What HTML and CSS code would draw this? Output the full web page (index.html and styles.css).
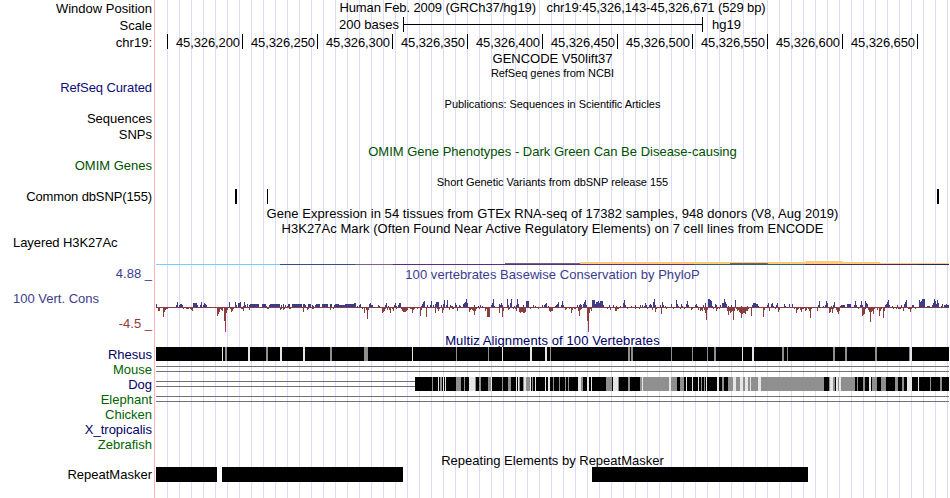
FILE: index.html
```html
<!DOCTYPE html>
<html lang="en">
<head>
    <meta charset="UTF-8">
    <title>Genome Browser - chr19:45,326,143-45,326,671</title>
    <link rel="stylesheet" href="styles.css">
</head>
<body>
    <div class="browser">
        <div class="row head">
            <div class="label">Window Position</div>
            <div class="track title position">Human Feb. 2009 (GRCh37/hg19) &nbsp; chr19:45,326,143-45,326,671 (529 bp)</div>
        </div>
        <div class="row head">
            <div class="label">Scale</div>
            <div class="track scale">
                <span class="scale-size">200 bases</span>
                <span class="scale-bar"></span>
                <span>hg19</span>
            </div>
        </div>
        <div class="row head">
            <div class="label">chr19:</div>
            <div class="track ruler">
                <span class="first"></span>
                <span>45,326,200</span>
                <span>45,326,250</span>
                <span>45,326,300</span>
                <span>45,326,350</span>
                <span>45,326,400</span>
                <span>45,326,450</span>
                <span>45,326,500</span>
                <span>45,326,550</span>
                <span>45,326,600</span>
                <span>45,326,650</span>
            </div>
        </div>

        <div class="row h15"><div class="label"></div><div class="track title">GENCODE V50lift37</div></div>
        <div class="row h14"><div class="label"></div><div class="track title small">RefSeq genes from NCBI</div></div>
        <div class="row h17"><div class="label refseq">RefSeq Curated</div></div>

        <div class="row h14"><div class="label"></div><div class="track title small">Publications: Sequences in Scientific Articles</div></div>
        <div class="row h16"><div class="label">Sequences</div></div>
        <div class="row h17"><div class="label">SNPs</div></div>

        <div class="row h14"><div class="label"></div><div class="track title omim">OMIM Gene Phenotypes - Dark Green Can Be Disease-causing</div></div>
        <div class="row h17"><div class="label omim">OMIM Genes</div></div>

        <div class="row h14"><div class="label"></div><div class="track title small">Short Genetic Variants from dbSNP release 155</div></div>
        <div class="row h17">
            <div class="label snp-label">Common dbSNP(155)</div>
            <svg class="track" width="794" height="15" shape-rendering="crispEdges">
                <path d="M79 0h2v15h-2zM111 0h1v15h-1zM781 0h2v15h-2z"/>
            </svg>
        </div>

        <div class="row h15"><div class="label"></div><div class="track title wide">Gene Expression in 54 tissues from GTEx RNA-seq of 17382 samples, 948 donors (V8, Aug 2019)</div></div>
        <div class="row h14"><div class="label"></div><div class="track title wide">H3K27Ac Mark (Often Found Near Active Regulatory Elements) on 7 cell lines from ENCODE</div></div>
        <div class="row layered">
            <div class="label left">Layered H3K27Ac</div>
            <svg class="track" width="794" height="31" shape-rendering="crispEdges">
                <path fill="#73d0ff" d="M0 29h124v1H0z"/>
                <path fill="#35507f" d="M124 29h75v1h-75z"/>
                <path fill="#80607f" d="M199 29h38v1h-38z"/>
                <path fill="#5f2a7e" d="M237 29h301v1H237z"/>
                <path fill="#35607c" d="M538 29h111v1H538z"/>
                <path fill="#4b2460" d="M649 29h113v1H649z"/>
                <path fill="#24245e" d="M762 29h31v1h-31z"/>
                <path fill="#6d6480" d="M349 28h75v1h-75z"/>
                <path fill="#ffcb78" d="M424 27h225v-1h38v1h37v1h69v1H424z"/>
                <path fill="#77685c" d="M574 28h38v1h-38z"/>
            </svg>
        </div>

        <div class="row cons">
            <div class="label cons-labels">
                <span class="up">4.88 _</span>
                <span class="up left">100 Vert. Cons</span>
                <span class="down">-4.5 _</span>
            </div>
            <div class="track">
                <div class="title wide up">100 vertebrates Basewise Conservation by PhyloP</div>
                <svg id="phylop" width="794" height="51" shape-rendering="crispEdges"></svg>
            </div>
        </div>

        <div class="row h14"><div class="label"></div><div class="track title multiz blue">Multiz Alignments of 100 Vertebrates</div></div>
        <div class="row h15"><div class="label blue">Rhesus</div><svg class="track" id="rhesus" width="794" height="15" shape-rendering="crispEdges"></svg></div>
        <div class="row h15"><div class="label green">Mouse</div><div class="track gap"></div></div>
        <div class="row h15"><div class="label blue">Dog</div><div class="track gap"><svg id="dog" width="794" height="15" shape-rendering="crispEdges"></svg></div></div>
        <div class="row h15"><div class="label green">Elephant</div><div class="track gap"></div></div>
        <div class="row h15"><div class="label green">Chicken</div></div>
        <div class="row h15"><div class="label blue">X_tropicalis</div></div>
        <div class="row h15"><div class="label green">Zebrafish</div></div>

        <div class="row h15"><div class="label"></div><div class="track title repeat-title">Repeating Elements by RepeatMasker</div></div>
        <div class="row h15">
            <div class="label">RepeatMasker</div>
            <svg class="track" width="794" height="15" shape-rendering="crispEdges">
                <path d="M0 0h61v15H0zM66 0h181v15H66zM436 0h216v15H436z"/>
            </svg>
        </div>
    </div>
    <script src="tracks.js"></script>
</body>
</html>
```
FILE: styles.css
```css
body {
    margin: 0;
    background: #fff;
    color: #000;
    font-family: "Liberation Sans", Arial, Helvetica, sans-serif;
    font-size: 13px;
    line-height: 15px;
}
.browser {
    width: 950px;
    height: 498px;
    overflow: hidden;
    box-sizing: border-box;
    /* red divider, then the vertical guide lines */
    background:
        linear-gradient(#ffb3b3, #ffb3b3) 154px 0 / 1px 100% no-repeat,
        linear-gradient(#fff, #fff) 0 0 / 156px 100% no-repeat,
        linear-gradient(to right, #dcdcf8 1px, transparent 1px) 167px 0 / 12px 100%;
}
.row {
    display: grid;
    grid-template-columns: 152px 794px;
    column-gap: 4px;
    white-space: nowrap;
}
.head {
    height: 17px;
}
.head .label, .head .ruler {
    line-height: 17px;
}
.h14 { height: 14px; }
.h15 { height: 15px; }
.h16 { height: 16px; }
.h17 { height: 17px; }
.label {
    text-align: right;
}
.left {
    text-align: left;
    padding-left: 13px;
}
.layered .left {
    letter-spacing: -0.07px;
}
.title {
    text-align: center;
    width: 793px;
}
.position {
    letter-spacing: -0.1px;
}
.wide {
    letter-spacing: 0.05px;
}
.multiz {
    letter-spacing: 0.1px;
}
.small {
    font-size: 11px;
    letter-spacing: -0.04px;
}
svg {
    display: block;
}
.scale {
    display: flex;
}
.scale-size {
    width: 243px;
    text-align: right;
    margin-right: 4px;
}
.scale-bar {
    width: 298px;
    height: 15px;
    border-left: 1px solid #000;
    border-right: 1px solid #000;
    background: linear-gradient(#000, #000) 0 7px / 100% 1px no-repeat;
    margin-right: 9px;
}
.ruler {
    display: flex;
    letter-spacing: -0.1px;
}
.ruler span {
    box-sizing: border-box;
    width: 75px;
    height: 15px;
    padding-right: 2px;
    border-right: 1px solid #000;
    text-align: right;
}
.ruler .first {
    width: 12px;
}
.refseq {
    color: #0c0c78;
    letter-spacing: -0.1px;
}
.snp-label {
    letter-spacing: -0.12px;
}
.omim { color: #005000; }
.blue { color: #000064; }
.green { color: #006400; }
.up { color: #3c3c8c; }
.down { color: #8c3c3c; }
.layered {
    height: 31px;
}
.cons {
    height: 67px;
}
.cons-labels {
    display: flex;
    flex-direction: column;
    gap: 10px;
}
.cons .title, .repeat-title {
    padding-top: 1px;
}
.gap {
    width: 793px;
    background:
        linear-gradient(#707070, #707070) 0 4px / 100% 1px no-repeat,
        linear-gradient(#707070, #707070) 0 9px / 100% 1px no-repeat;
}
```
FILE: tracks.js
```js
const NS = 'http://www.w3.org/2000/svg';

function rect(svg, x, y, w, h, fill) {
    const r = document.createElementNS(NS, 'rect');
    r.setAttribute('x', x);
    r.setAttribute('y', y);
    r.setAttribute('width', w);
    r.setAttribute('height', h);
    r.setAttribute('fill', fill);
    svg.appendChild(r);
}

// Each block covers 200px of the track. Positions are thirds of a pixel
// from the block start, "from-to:height" or "from:height" for one column.
const blocks = [
    { start: -6,
      up: '18:3 78:2 81:5 87:2 90-96:3 96:2 129-141:4 141:2 150:2 153:5 159:2 162:4 165:3 168:2 237:5 255:5 258:2 264-270:4 270:5 279:1 282:5 285:2 291:3 297:2 300-327:3 336-348:3 348:1 357:2 360-390:3 393:2 399:3 405:2 411:1 414:3 417:3 426-456:3 459-465:3 465:2 474-483:3 486:2 489:1 495:2 498-510:3 516-534:3 540-546:3 552:2 555:3 558-567:3 567:2 570-585:2 585-600:3',
      down: '21:1 24-30:4 39:10 42:5 45:3 48:2 51:2 84:1 99:2 108-117:2 120:2 123:3 126:4 201:9 204:7 207:5 210:2 213:3 216:4 222:14 225:23 228:6 231:3 240:2 243:5 246:4 249:2 252:1 273:2 276:2 279:4 297:3 327:1 351-357:2 390:3 393:2 399:3 402:2 417-423:2 459:5 471:3 474:2 486:2 489:2 510:1 534:1 540:3 549:2' },
    { start: 194,
      up: '0-12:3 12-18:4 21:1 27:2 30:3 57:3 60:4 63-69:2 84:2 87:1 105:2 108:4 114:1 132:2 135:4 138:1 144:2 147-153:4 213:1 216:3 219:5 222:6 231:2 240:2 243:6 249:2 255:3 258-267:5 273:2 279:3 282:7 288:2 291:7 300:2 303-309:1 315:4 318:2 327:2 330:1 339:3 342:4 345:5 348:8 351:4 372:2 384:1 390:2 396:1 423:2 426:4 429:8 432:1 447:3 450:2 453:4 456:2 471:8 474:2 480:4 483:8 492:1 498:2 501:8 504:3 519:2 528-537:6 549:2 555:1 576:2 582:2 585:3 588:4 594:1',
      down: '36:2 42:6 48:3 51:12 54:3 72-78:1 96:6 99:5 102:4 105:2 111:3 117:3 120:6 126:2 129:4 138:2 153:2 156:4 159-168:5 168:4 171:3 180-186:2 186:6 189:3 192:2 201:2 210:9 213:3 222:1 228:10 234:1 240:1 255:6 261:2 264:4 267:2 276:6 279:3 297:3 306:2 309:2 321:4 330:1 357:5 360:3 363:2 366:3 369:4 372:8 375:4 378:2 387:2 405:4 408:2 411-420:10 432:1 447:6 456:10 459:4 465:1 474:3 477:2 489:2 495:2 498:4 507:5 510:6 513-519:5 519-525:6 525:5 540:2 564:2 567:1 582:1 597:4' },
    { start: 394,
      up: '15:1 18:2 21:3 24:5 33:2 36:6 39:2 81:2 87:2 90:3 93:2 99:3 102:5 105:7 108:2 126:7 129-135:7 135:3 138-144:5 144-147:6 147:4 150-159:6 156:4 159:2 177:2 189:2 198:1 210:1 219:4 222:7 225:2 243:1 255:2 270:2 276:2 282:1 285:4 288:2 297:2 300:3 303:2 309:5 312:8 315:2 330:2 336:5 339:2 345:1 363:3 378:7 381:3 384:1 393:3 396:1 408:3 411:6 414:2 435:2 438:3 441:1 459:2 465:4 474-480:8 480:7 483:6 486:1 495:3 498:2 510:2 516:4 519:4 522:8 525:5 528:3 534:1 543:2 555:7 573:1 591:1',
      down: '0:5 3-9:4 9:1 45:3 48:2 57:2 63:6 66:3 72:2 75:2 84:4 87:9 90:3 93:2 96:1 111:14 114:23 117:6 120:2 123:4 171:2 180:3 183:1 192:1 195:4 198:4 201:2 204:2 213:1 231:2 255:2 267:2 291:2 303:1 306:3 315:5 318:2 324:1 333:7 336:1 348:2 369:2 390:2 402:2 423:3 426:2 438:1 444:3 450:4 453:3 456:4 462:3 465:6 468:13 471:3 489:2 498:4 501:2 507:2 531:4 534:8 537:4 540:6 543:5 546:4 549:13 552:4 558:2 561:4 564:3 567:5 570:6 573:11 576:7 579:6 582:6 585:7 588:4 591:4 594:2' },
    { start: 594,
      up: '6:2 9-18:4 18-24:3 24:1 51:2 54:4 63:3 66:4 69:1 78:2 81:4 102:3 105:1 117:3 126:3 204:2 207:6 219:1 225:2 228:6 231:4 243:1 249:2 252:5 270:1 273-285:2 291-303:3 312:2 315:6 318:2 330:2 333:6 336:2 345:6 348:4 351:3 405:2 408:3 411:5 414:7 417:2 426:1 441:2 453:2 462:3 465:5 468:7 486:2 489:2 507:7 510:5 513:6 516-525:8 531:1 534-540:1 546:2 549:4 552:8 555:6 558:3 561:7 564:4 573:1 576:3 582:2 585:2 588:3 591:2 594:2',
      down: '3:9 27-36:1 39:10 42:3 57:4 60:1 72:1 75:2 84:5 87:3 129-198:1 132:2 138:6 141:3 144:2 150:3 153:5 156-162:2 165:4 168:3 174:2 177:4 180:11 183:2 201:4 237:6 240:5 243:2 246:6 249:2 258:3 261:5 264:7 267:4 297:1 309:1 324:2 336:9 339:8 342:7 345:2 354:3 357:5 360:15 363:5 366:4 369:7 372:2 381:3 387:9 390:4 393:2 399:11 402:4 423:1 429:2 438:2 444-453:2 459:4 474:2 477:2 480:5 483:2 495:2' }
];

function eachItem(text, start, fn) {
    text.split(' ').forEach(item => {
        const [range, value] = item.split(':');
        const [from, to] = range.split('-').map(Number);
        fn(start + from / 3, ((to || from + 3) - from) / 3, value);
    });
}

const phylop = document.getElementById('phylop');
const base = 25;
rect(phylop, 0, base, 793, 1, '#8c3c3c');
blocks.forEach(b => {
    eachItem(b.up, b.start, (x, w, h) => rect(phylop, x, base - h, w, +h, '#3c3c8c'));
    eachItem(b.down, b.start, (x, w, h) => rect(phylop, x, base, w, +h, '#8c3c3c'));
});
// clipped values
rect(phylop, 69, base + 23, 1, 2, '#ff00ff');
rect(phylop, 432, base + 23, 1, 2, '#ff00ff');

// Alignment breaks: g = weak, l = very weak
const shades = { g: '#8f8f8f', l: '#e6e6e6' };
const rhesus = [
    [-6, '216:l 225-231:g 294-300:l 348-354:g 390-396:l 459-465:l 540-546:g'],
    [194, '42-54:g 186:l 318:g 414:g 456:l 540-546:l 585-591:l'],
    [394, '0:g 234-240:g 243-249:g 363:g 426:g 471:g 492-498:g 576:l'],
    [594, '6-12:l 96-102:g 111:g 249-255:g 285-291:g 375-381:g 477:g 480-486:l']
];
const dog = [
    [194, '246:g 264:l 270-276:g 279:l 285:l 318-333:g 342:g 357-375:l 375:g 387-393:g 414-423:g 423:l 456:g 474-483:g 498:l 504:l 507:g 519:g 522-528:l 528-540:g 540:l 546:g 555:l 585:l 594-600:l'],
    [394, '9:g 27:g 45:g 54:g 84-93:l 93-99:g 111-117:l 123:l 168-186:g 189-204:l 204:g 234-240:g 270-276:g 276:l 279-357:g 357-363:l 363-381:g 390-402:g 408:l 426:l 444:l 453:g 462:g 468:l 501-507:l 516-522:g 534-549:g 549-558:l 558-570:g 570-579:l 579-585:g 585-594:l 594-600:g'],
    [594, '0:l 3-24:g 24-33:l 33-222:g 237:g 240-249:l 249-255:g 258-264:l 264:g 267-273:l 273-315:g 321:g 339-345:g 357-363:l 366-381:g 393-408:g 435-444:g 456-462:g 471-486:l 504:l 540:g 570-576:g']
];

function drawAlignment(id, from, data) {
    const svg = document.getElementById(id);
    rect(svg, from, 0, 793 - from, 14, '#000');
    data.forEach(([start, text]) => {
        eachItem(text, start, (x, w, s) => rect(svg, x, 0, w, 14, shades[s]));
    });
}

drawAlignment('rhesus', 0, rhesus);
drawAlignment('dog', 259, dog);
```
